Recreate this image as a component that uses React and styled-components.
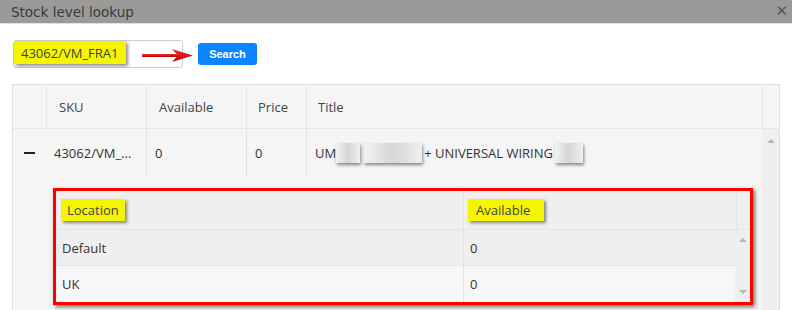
import React from 'react';
import styled, { createGlobalStyle } from 'styled-components';

const GlobalStyle = createGlobalStyle`
  body {
    margin: 0;
    background: #fff;
    font-family: 'Open Sans', 'Liberation Sans', sans-serif;
    color: #333;
  }
`;

const Dialog = styled.div`
  width: 792px;
  height: 310px;
  overflow: hidden;
  background: #fff;
`;

const TitleBar = styled.div`
  height: 23px;
  background: #9a9a9a;
  border-bottom: 1px solid #e2e2e2;
  display: flex;
  align-items: center;
  justify-content: space-between;
  padding: 0 4px 0 11px;
  font-family: 'DejaVu Sans', sans-serif;
  font-size: 13.5px;
  color: #3a3a3a;
`;

const Close = styled.span`
  font-size: 15px;
  color: #555;
  line-height: 1;
`;

const Toolbar = styled.div`
  position: relative;
  display: flex;
  align-items: center;
  padding: 16px 0 0 13px;
  height: 28px;
`;

const InputBox = styled.div`
  width: 168px;
  height: 26px;
  border: 1px solid #ccc;
  border-radius: 3px;
  display: flex;
  align-items: flex-start;
`;

const Highlight = styled.span`
  display: inline-flex;
  align-items: center;
  background: #f5f500;
  box-shadow: 2px 2px 3px rgba(0, 0, 0, 0.45);
  color: #444;
  padding: ${p => p.$pad || '0 6px'};
  height: ${p => p.$h || 23}px;
  font-size: 13px;
`;

const Arrow = styled.svg`
  position: absolute;
  left: 140px;
  top: 23px;
  width: 56px;
  height: 16px;
`;

const SearchButton = styled.button`
  margin-left: 15px;
  width: 59px;
  height: 22px;
  border: none;
  border-radius: 3px;
  background: #0a84ff;
  color: #fff;
  font-family: 'Liberation Sans', sans-serif;
  font-size: 11px;
  font-weight: bold;
  padding: 0;
`;

const Grid = styled.div`
  margin: 16px 0 0 12px;
  width: 766px;
  border-left: 1px solid #e0e0e0;
  border-top: 1px solid #e0e0e0;
  border-right: 1px solid #e0e0e0;
  background: #f5f5f5;
`;

const cols = '33px 100px 100px 60px 1fr 17px';

const HeaderRow = styled.div`
  display: grid;
  grid-template-columns: ${cols};
  height: 43px;
  border-bottom: 1px solid #e6e6e6;
`;

const HeadCell = styled.div`
  display: flex;
  align-items: center;
  padding-left: ${p => p.$pad ?? 8}px;
  border-left: ${p => (p.$first ? 'none' : '1px solid #e6e6e6')};
  font-size: 13px;
  color: #444;
`;

const Body = styled.div`
  display: grid;
  grid-template-columns: 1fr 17px;
`;

const Scroll = styled.div`
  background: #efefef;
  display: flex;
  flex-direction: column;
  justify-content: space-between;
  align-items: center;
  padding: ${p => p.$pad || '10px 0'};
`;

const Tri = styled.span`
  width: 0;
  height: 0;
  border-left: 4px solid transparent;
  border-right: 4px solid transparent;
  ${p => (p.$down ? 'border-top: 4px solid #b5b5b5;' : 'border-bottom: 4px solid #b5b5b5;')}
`;

const DataRow = styled.div`
  display: grid;
  grid-template-columns: 33px 100px 100px 60px 1fr;
  height: 48px;
`;

const Cell = styled.div`
  display: flex;
  align-items: center;
  padding-left: 8px;
  border-left: ${p => (p.$line ? '1px solid #e3e3e3' : 'none')};
  font-size: 13px;
  color: #333;
  white-space: nowrap;
`;

const Minus = styled.span`
  width: 11px;
  height: 2px;
  background: #222;
  margin-left: 3px;
`;

const Blur = styled.span`
  display: inline-block;
  width: ${p => p.$w}px;
  height: 20px;
  margin: 0 2px 0 ${p => p.$ml ?? 2}px;
  background: linear-gradient(90deg, #f2f2f2, #d6d6d6 50%, #efefef);
  box-shadow: 1px 2px 3px rgba(0, 0, 0, 0.45);
`;

const Detail = styled.div`
  padding: 11px 0 6px 40px;
`;

const RedBox = styled.div`
  width: 694px;
  border: 3px solid #ff0000;
  box-shadow: 2px 2px 4px rgba(0, 0, 0, 0.55);
  display: grid;
  grid-template-columns: 1fr 15px;
`;

const SubHeader = styled.div`
  grid-column: 1 / 3;
  display: grid;
  grid-template-columns: 407px 273px 14px;
  height: 38px;
  background: #efefef;
  border-bottom: 1px solid #e3e3e3;
`;

const SubHead = styled.div`
  display: flex;
  align-items: center;
  padding-left: ${p => p.$pad ?? 4}px;
  border-left: ${p => (p.$line ? '1px solid #e3e3e3' : 'none')};
  font-size: 13px;
`;

const SubRow = styled.div`
  display: grid;
  grid-template-columns: 407px 1fr;
  height: ${p => p.$h}px;
  background: ${p => p.$bg};
  border-bottom: ${p => (p.$last ? 'none' : '1px solid #e6e6e6')};
`;

const SubCell = styled.div`
  display: flex;
  align-items: center;
  padding-left: 6px;
  border-left: ${p => (p.$line ? '1px solid #e3e3e3' : 'none')};
  font-size: 13px;
  color: #333;
`;

const SubBody = styled.div`
  display: flex;
  flex-direction: column;
`;

export default function App() {
  return (
    <>
      <GlobalStyle />
      <Dialog>
        <TitleBar>
          <span>Stock level lookup</span>
          <Close>✕</Close>
        </TitleBar>
        <Toolbar>
          <InputBox>
            <Highlight $pad="0 8px 0 7px">43062/VM_FRA1</Highlight>
          </InputBox>
          <SearchButton>Search</SearchButton>
          <Arrow viewBox="0 0 56 16">
            <defs>
              <linearGradient id="ar" x1="0" y1="0" x2="0" y2="1">
                <stop offset="0" stopColor="#ff3030" />
                <stop offset="1" stopColor="#b00000" />
              </linearGradient>
            </defs>
            <path d="M2 7 H38 V10 H2 Z" fill="url(#ar)" />
            <path d="M32 2 L53 8.5 L32 15 L38 8.5 Z" fill="url(#ar)" />
          </Arrow>
        </Toolbar>
        <Grid>
          <HeaderRow>
            <HeadCell $first />
            <HeadCell $pad={12}>SKU</HeadCell>
            <HeadCell $pad={12}>Available</HeadCell>
            <HeadCell $pad={11}>Price</HeadCell>
            <HeadCell $pad={11}>Title</HeadCell>
            <HeadCell $pad={0} />
          </HeaderRow>
          <Body>
            <div>
              <DataRow>
                <Cell><Minus /></Cell>
                <Cell>43062/VM_...</Cell>
                <Cell $line>0</Cell>
                <Cell $line>0</Cell>
                <Cell $line>
                  UM<Blur $w={24} $ml={0} /><Blur $w={58} />+ UNIVERSAL WIRING<Blur $w={28} />
                </Cell>
              </DataRow>
              <Detail>
                <RedBox>
                  <SubHeader>
                    <SubHead $pad={5}>
                      <Highlight $h={22}>Location</Highlight>
                    </SubHead>
                    <SubHead $line $pad={4}>
                      <Highlight $h={22} $pad="0 14px 0 8px">Available</Highlight>
                    </SubHead>
                    <SubHead $line $pad={0} />
                  </SubHeader>
                  <SubBody>
                    <SubRow $h={35} $bg="#efefef">
                      <SubCell>Default</SubCell>
                      <SubCell $line>0</SubCell>
                    </SubRow>
                    <SubRow $h={36} $bg="#f7f7f7" $last>
                      <SubCell>UK</SubCell>
                      <SubCell $line>0</SubCell>
                    </SubRow>
                  </SubBody>
                  <Scroll $pad="8px 0 8px">
                    <Tri />
                    <Tri $down />
                  </Scroll>
                </RedBox>
              </Detail>
            </div>
            <Scroll>
              <Tri />
            </Scroll>
          </Body>
        </Grid>
      </Dialog>
    </>
  );
}
